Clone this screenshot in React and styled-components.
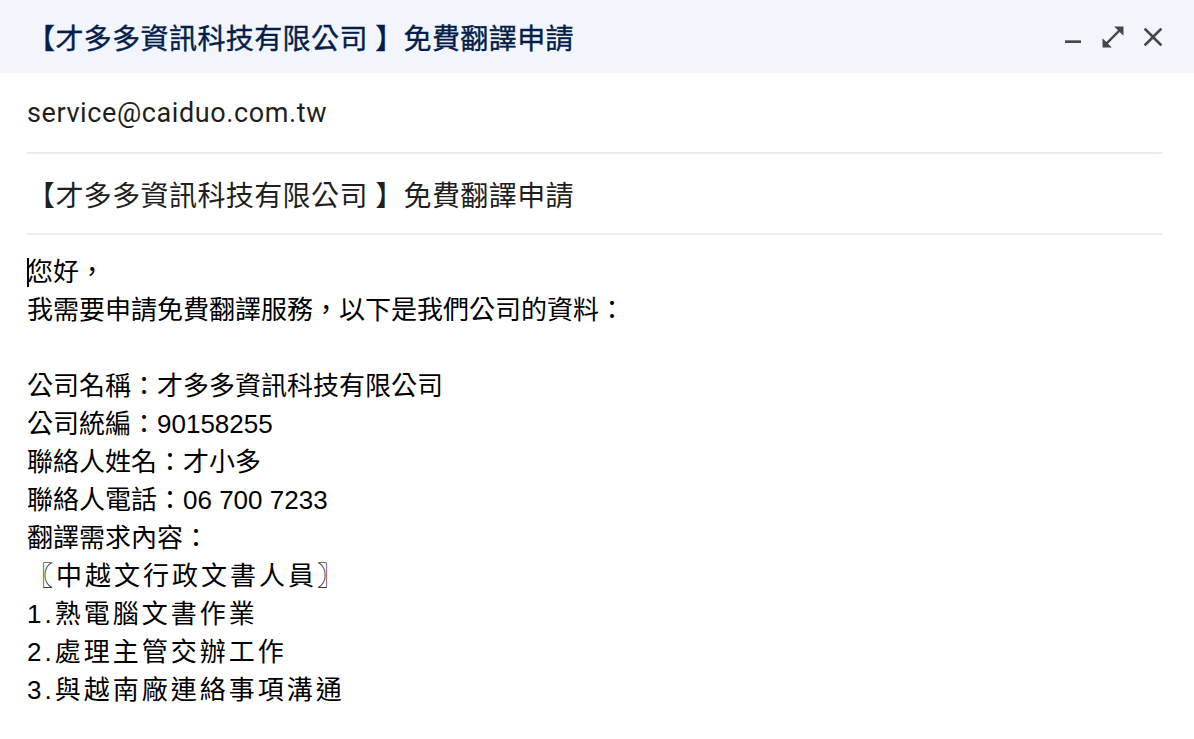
import React from "react";
import styled, { createGlobalStyle } from "styled-components";

const GlobalStyle = createGlobalStyle`
  html, body {
    margin: 0;
    padding: 0;
    background: #fff;
  }
`;

const Minimize = () => (
  <svg width="32" height="32" viewBox="0 0 24 24" fill="currentColor">
    <path d="M6 14.5h12v2H6z" />
  </svg>
);

const Expand = () => (
  <svg width="28" height="28" viewBox="0 0 24 24" fill="currentColor">
    <path d="M21 11V3h-8l3.29 3.29-10 10L3 13v8h8l-3.29-3.29 10-10z" />
  </svg>
);

const Close = () => (
  <svg width="32" height="32" viewBox="0 0 24 24" fill="currentColor">
    <path d="M19 6.41L17.59 5 12 10.59 6.41 5 5 6.41 10.59 12 5 17.59 6.41 19 12 13.41 17.59 19 19 17.59 13.41 12z" />
  </svg>
);

const App = () => (
  <Wrap>
    <GlobalStyle />
    <Header>
      <Title>【才多多資訊科技有限公司 】免費翻譯申請</Title>
      <Actions>
        <IconButton aria-label="Minimize">
          <Minimize />
        </IconButton>
        <IconButton aria-label="Full screen">
          <Expand />
        </IconButton>
        <IconButton aria-label="Close">
          <Close />
        </IconButton>
      </Actions>
    </Header>
    <Fields>
      <Field>service@caiduo.com.tw</Field>
      <Field $cjk>【才多多資訊科技有限公司 】免費翻譯申請</Field>
    </Fields>
    <Body>
      <Line>
        <Caret />
        您好，
      </Line>
      <Line>我需要申請免費翻譯服務，以下是我們公司的資料：</Line>
      <Line>&nbsp;</Line>
      <Line>公司名稱：才多多資訊科技有限公司</Line>
      <Line>公司統編：90158255</Line>
      <Line>聯絡人姓名：才小多</Line>
      <Line>聯絡人電話：06 700 7233</Line>
      <Line>翻譯需求內容：</Line>
      <Line $spaced>〖中越文行政文書人員〗</Line>
      <Line $spaced>1.熟電腦文書作業</Line>
      <Line $spaced>2.處理主管交辦工作</Line>
      <Line $spaced>3.與越南廠連絡事項溝通</Line>
    </Body>
  </Wrap>
);

const Wrap = styled.div`
  width: 1194px;
  min-height: 739px;
  background: #fff;
`;

const Header = styled.header`
  height: 73px;
  display: flex;
  align-items: center;
  justify-content: space-between;
  padding: 0 21px 0 27px;
  box-sizing: border-box;
  background: #f2f6fc;
`;

const Title = styled.h1`
  margin: 0;
  font-family: Roboto, "Noto Sans CJK TC", sans-serif;
  font-size: 28px;
  font-weight: 400;
  color: #041e49;
  letter-spacing: 0.4px;
  -webkit-text-stroke: 0.4px #041e49;
`;

const Actions = styled.div`
  display: flex;
  align-items: center;
`;

const IconButton = styled.button`
  width: 40px;
  height: 40px;
  display: flex;
  align-items: center;
  justify-content: center;
  padding: 0;
  border: none;
  background: none;
  color: #444746;
`;

const Fields = styled.div`
  padding: 0 32px 0 27px;
`;

const Field = styled.div`
  height: 79px;
  display: flex;
  align-items: center;
  border-bottom: 2px solid #e8ebef;
  font-family: Roboto, "Noto Sans CJK TC", sans-serif;
  font-size: ${(p) => (p.$cjk ? "28px" : "27px")};
  letter-spacing: ${(p) => (p.$cjk ? "0.4px" : "0.6px")};
  color: #1f1f1f;
`;

const Body = styled.div`
  padding: 18px 27px;
  font-family: "Liberation Sans", "Noto Sans CJK TC", sans-serif;
  font-size: 26px;
  line-height: 38px;
  color: #000;
`;

const Line = styled.div`
  white-space: pre;
  letter-spacing: ${(p) => (p.$spaced ? "3px" : "0")};
`;

const Caret = styled.span`
  display: inline-block;
  width: 2px;
  height: 29px;
  margin-right: -2px;
  vertical-align: -6px;
  background: #000;
`;

export default App;
